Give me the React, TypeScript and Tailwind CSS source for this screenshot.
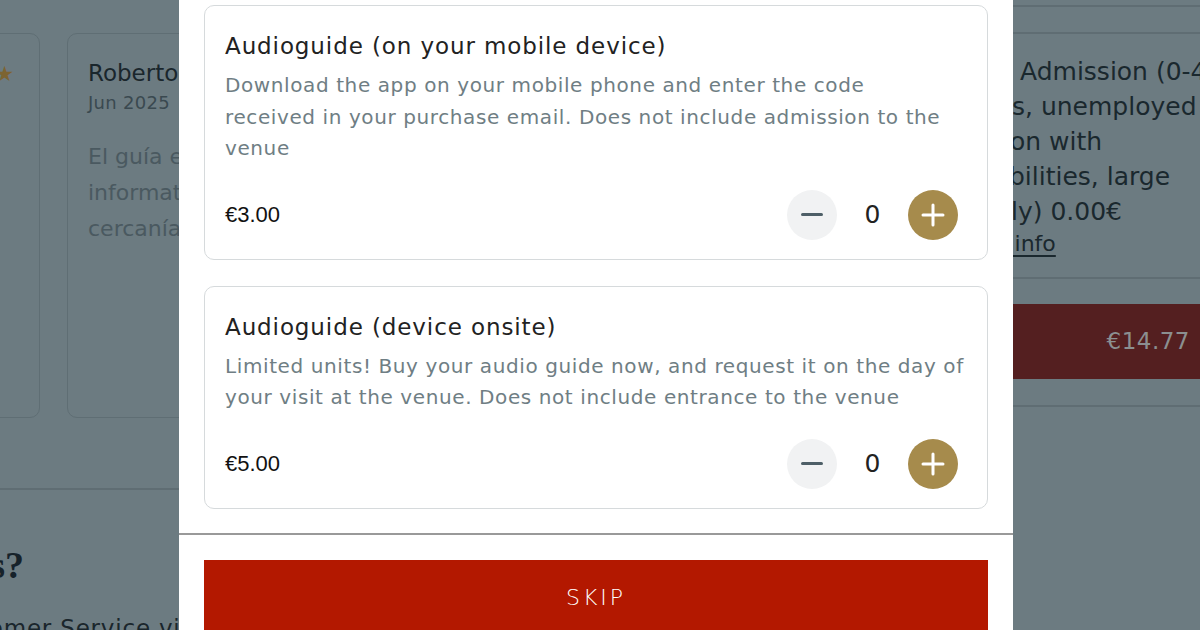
const gothic = "font-['DejaVu_Sans',sans-serif]";

type Addon = {
  title: string;
  lines: string[];
  price: string;
};

const addons: Addon[] = [
  {
    title: 'Audioguide (on your mobile device)',
    lines: [
      'Download the app on your mobile phone and enter the code',
      'received in your purchase email. Does not include admission to the',
      'venue',
    ],
    price: '€3.00',
  },
  {
    title: 'Audioguide (device onsite)',
    lines: [
      'Limited units! Buy your audio guide now, and request it on the day of',
      'your visit at the venue. Does not include entrance to the venue',
    ],
    price: '€5.00',
  },
];

function Stepper() {
  return (
    <div className="flex items-center gap-[15px]">
      <button className="w-[50px] h-[50px] rounded-full bg-[#f1f2f3] flex items-center justify-center">
        <span className="block w-[22px] h-[3px] rounded-full bg-[#4e5f67]" />
      </button>
      <span className={`${gothic} w-[41px] text-center text-[25px] text-[#222]`}>0</span>
      <button className="w-[50px] h-[50px] rounded-full bg-[#a68b4c] flex items-center justify-center">
        <svg width="24" height="24" viewBox="0 0 24 24" fill="none" stroke="white" strokeWidth="3" strokeLinecap="round">
          <path d="M12 2v20M2 12h20" />
        </svg>
      </button>
    </div>
  );
}

function AddonCard({ addon }: { addon: Addon }) {
  return (
    <div className="shrink-0 rounded-[10px] border border-[#d6dadc] px-[20px] pt-[24px] pb-[19px]">
      <div className={`${gothic} text-[23px] leading-[32px] tracking-[0.9px] text-[#222]`}>{addon.title}</div>
      <div className={`${gothic} mt-[8px] text-[20px] leading-[31.5px] tracking-[0.6px] text-[#6f7e84]`}>
        {addon.lines.map((l) => (
          <div key={l} className="whitespace-nowrap">{l}</div>
        ))}
      </div>
      <div className="mt-[25px] flex items-center justify-between">
        <span className="font-['Liberation_Sans',Arial,sans-serif] text-[22px] text-[#111]">{addon.price}</span>
        <div className="mr-[9px]">
          <Stepper />
        </div>
      </div>
    </div>
  );
}

function LeftPage() {
  return (
    <div className={`${gothic} w-[179px] shrink-0 overflow-hidden flex flex-col`}>
      <div className="shrink-0 pt-[33px] flex gap-[27px] ml-[-260px]">
        <div className="w-[300px] h-[385px] shrink-0 rounded-[10px] border border-[#5f6e74] flex justify-end pr-[25px] pt-[30px]">
          <span className="text-[21px] leading-none text-[#7d6431]">★</span>
        </div>
        <div className="w-[300px] h-[385px] shrink-0 rounded-[10px] border border-[#5f6e74] pl-[20px] pt-[24px] whitespace-nowrap">
          <div className="text-[23px] leading-[30px] text-[#1a262c]">Roberto</div>
          <div className="text-[18px] leading-[22px] mt-[4px] tracking-[0.3px] text-[#3a4950]">Jun 2025</div>
          <div className="mt-[25px] text-[22px] leading-[36px] text-[#4a5960]">
            <div>El guía era muy</div>
            <div>informativo y</div>
            <div>cercanía</div>
          </div>
        </div>
      </div>
      <div className="shrink-0 mt-[70px] h-[2px] bg-[#5f6d73]" />
      <div className="shrink-0 mt-[55px] w-[24px] flex justify-end">
        <span className="whitespace-nowrap font-['Liberation_Serif',serif] font-bold text-[38px] leading-[40px] text-[#16222a]">
          Questions?
        </span>
      </div>
      <div className="shrink-0 mt-[28px] ml-[-66px] whitespace-nowrap text-[23px] leading-[30px] tracking-[0.8px] text-[#1a262c]">
        Customer Service via email
      </div>
    </div>
  );
}

function RightPage() {
  return (
    <div className={`${gothic} w-[187px] shrink-0 overflow-hidden flex flex-col`}>
      <div className="shrink-0 mt-[5px] h-[2px] bg-[#5f6d73]" />
      <div className="shrink-0 mt-[25px] h-[2px] bg-[#5f6d73]" />
      <div className="shrink-0 mt-[20px] whitespace-nowrap text-[25px] leading-[35px] text-[#1a282e]">
        <div className="ml-[7px]">Admission (0-4</div>
        <div className="ml-[-1px]">s, unemployed</div>
        <div className="ml-[-3px]">on with</div>
        <div className="ml-[-4px]">bilities, large</div>
        <div className="ml-[-2px]">ly) 0.00€</div>
        <div className="ml-[-60px] text-[22px] leading-[30px] underline underline-offset-4">More info</div>
      </div>
      <div className="shrink-0 mt-[18px] h-[2px] bg-[#5f6d73]" />
      <div className="shrink-0 mt-[25px] h-[75px] bg-[#541f20] flex items-center justify-end pr-[10px]">
        <span className="text-[23px] tracking-[0.5px] text-[#8b8f90]">€14.77</span>
      </div>
      <div className="shrink-0 mt-[26px] h-[2px] bg-[#5f6d73]" />
    </div>
  );
}

export default function App() {
  return (
    <div className="w-[1200px] h-[630px] overflow-hidden bg-[#6c7b81] flex">
      <LeftPage />
      <div className="w-[834px] shrink-0 bg-white flex flex-col">
        <div className="shrink-0 px-[25px] pt-[5px] pb-[24px] flex flex-col gap-[26px]">
          {addons.map((a) => (
            <AddonCard key={a.title} addon={a} />
          ))}
        </div>
        <div className="shrink-0 h-[2px] bg-[#999]" />
        <div className="shrink-0 px-[25px] pt-[25px]">
          <button className={`${gothic} w-full h-[76px] bg-[#b31800] text-white text-[22px] tracking-[3px] font-light`}>
            SKIP
          </button>
        </div>
      </div>
      <RightPage />
    </div>
  );
}
